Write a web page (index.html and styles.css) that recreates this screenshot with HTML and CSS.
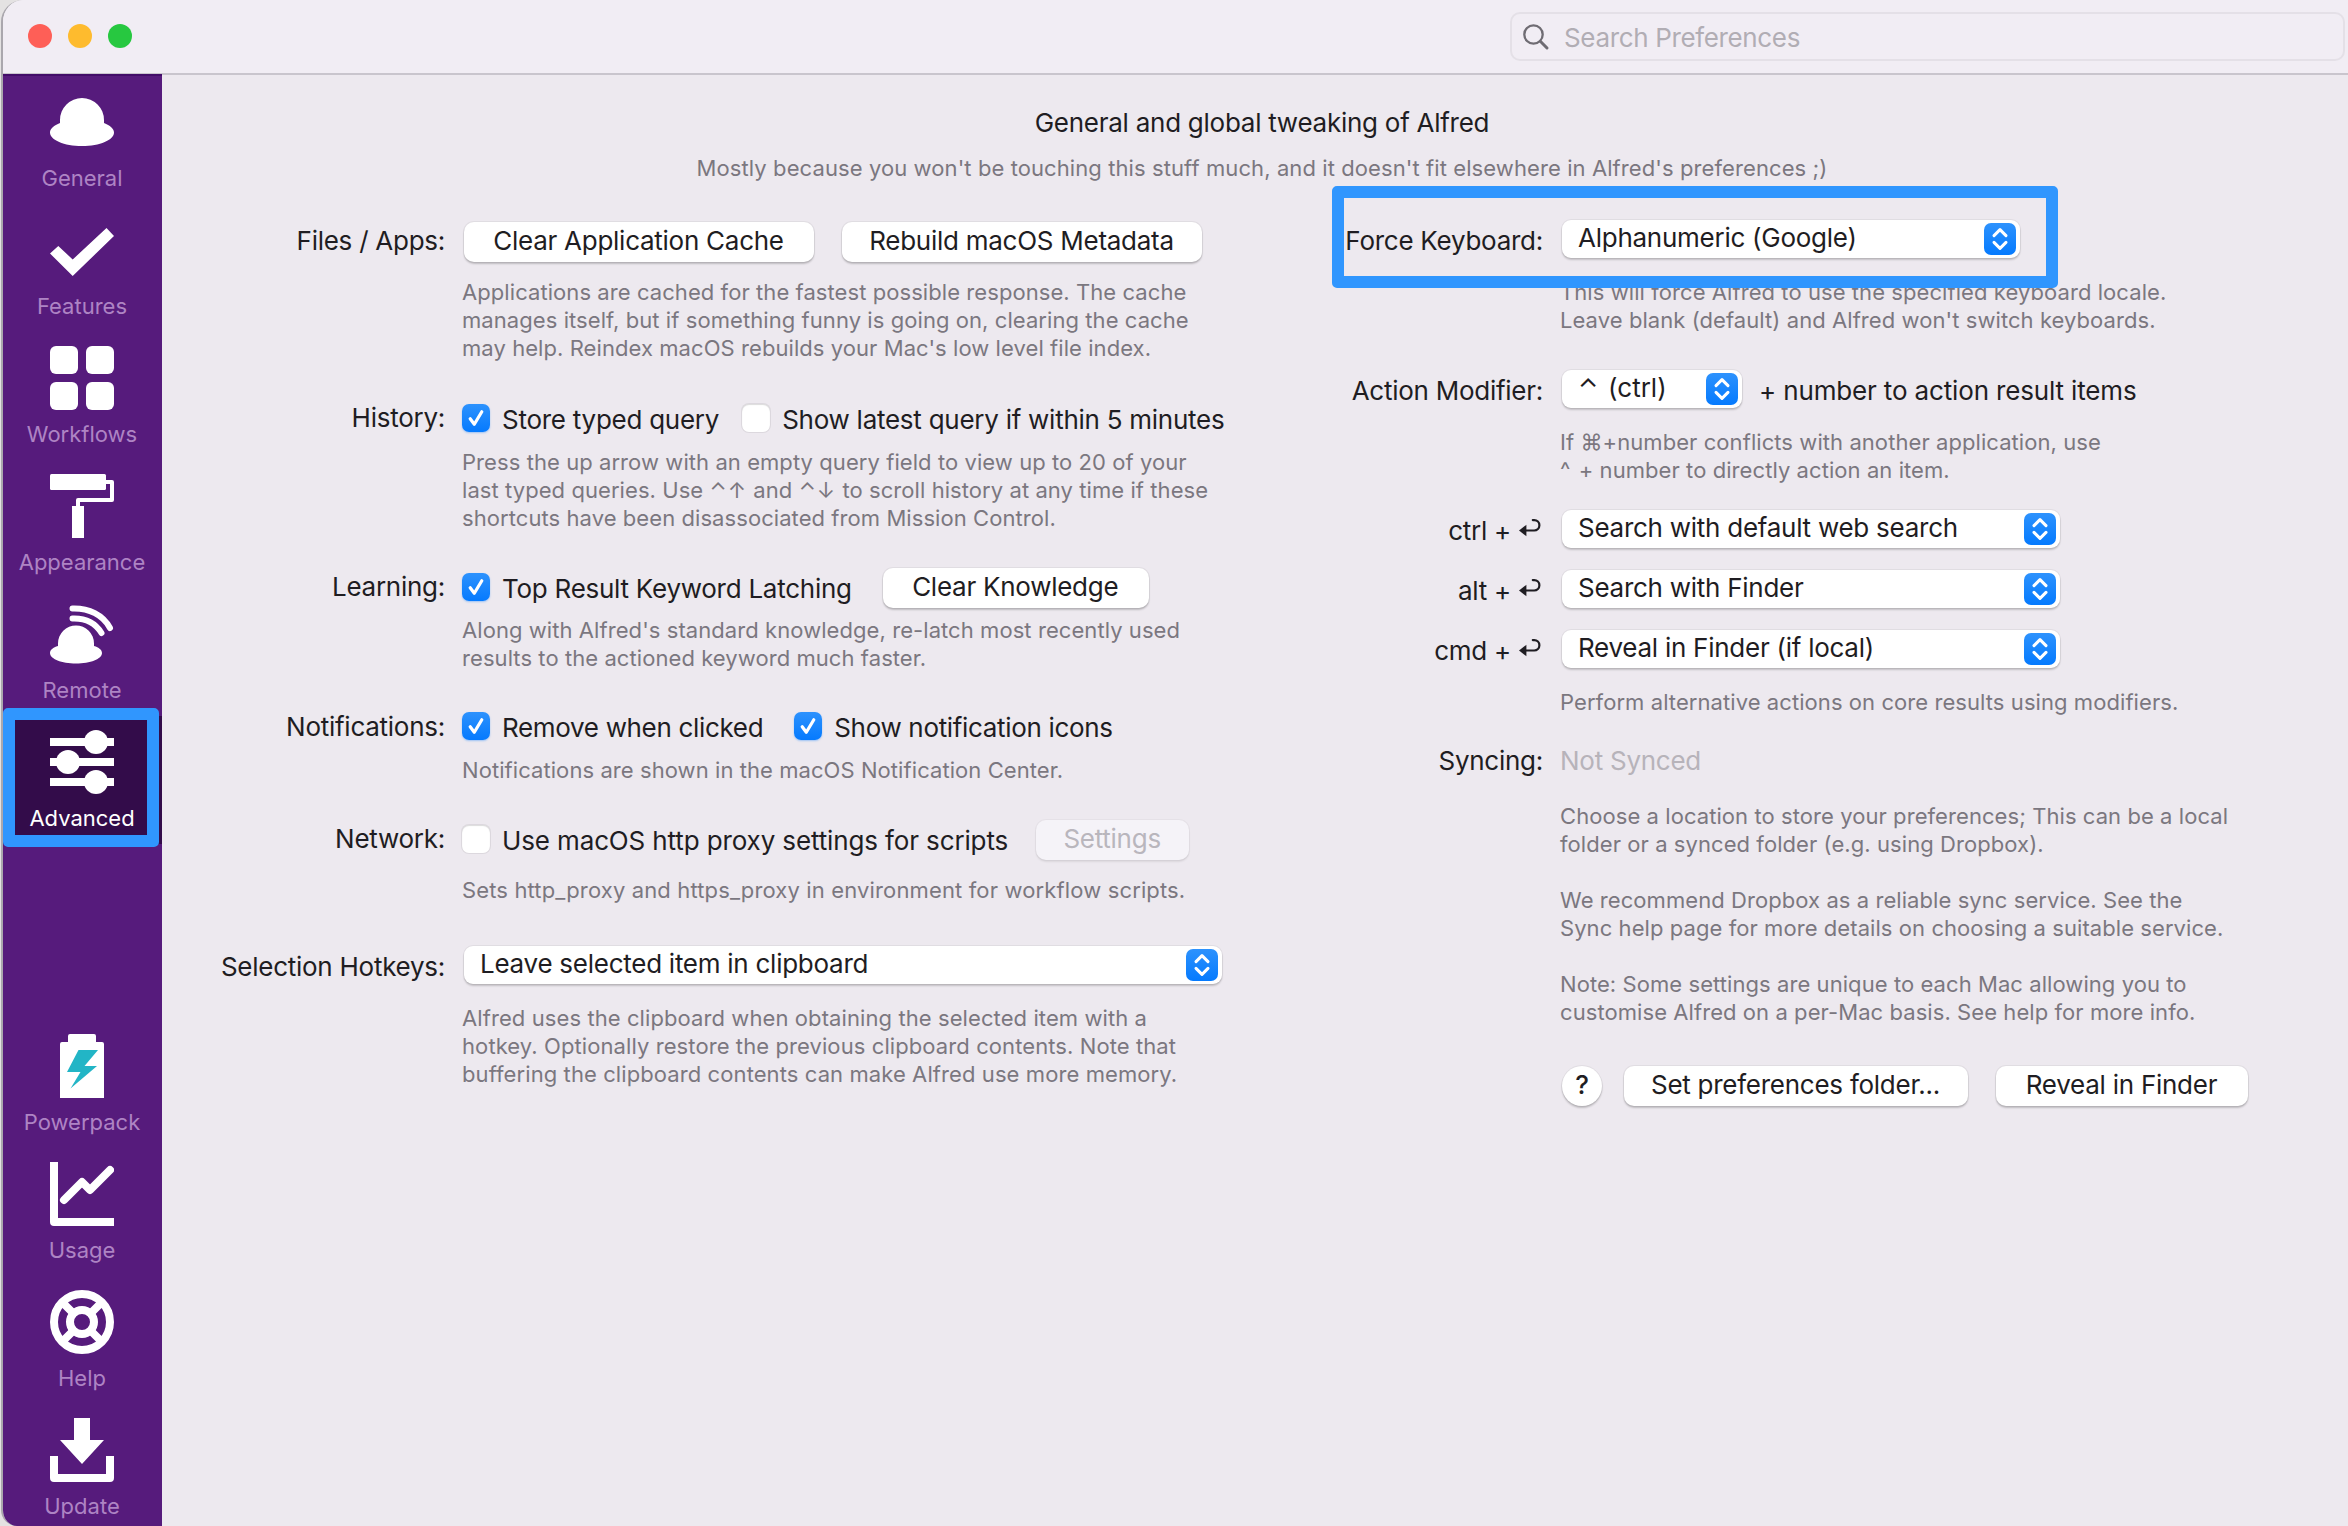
FILE: index.html
```html
<!DOCTYPE html>
<html lang="en">
<head>
<meta charset="utf-8">
<title>Alfred Preferences</title>
<link rel="stylesheet" href="styles.css">
</head>
<body>
<svg class="defs" aria-hidden="true">
  <symbol id="tick" viewBox="0 0 28 28"><path d="M8.2 14.8 12.3 20.3 19.8 7.8" fill="none" stroke="#fff" stroke-width="3.2" stroke-linecap="round" stroke-linejoin="round"/></symbol>
  <symbol id="chevrons" viewBox="0 0 32 32"><path d="M10 12.6 16 6.6l6 6M10 19.4l6 6 6-6" fill="none" stroke="#fff" stroke-width="3" stroke-linecap="round" stroke-linejoin="round"/></symbol>
  <symbol id="return" viewBox="0 0 24 20"><path d="M6 12.5h10.2a5.2 5.2 0 0 0 0-10.4h-1.4" fill="none" stroke="#1f1d22" stroke-width="2.2" stroke-linecap="round"/><path d="M1 12.5 8.4 6.8v11.4z" fill="#1f1d22"/></symbol>
</svg>
<div class="window">
  <header class="titlebar">
    <div class="lights"><i class="light close"></i><i class="light minimise"></i><i class="light zoom"></i></div>
    <div class="search">
      <svg width="28" height="28" viewBox="0 0 28 28"><circle cx="11.5" cy="11.5" r="9.2" fill="none" stroke="#6f6c73" stroke-width="2.3"/><path d="M18.3 18.3 25 25" stroke="#6f6c73" stroke-width="3" stroke-linecap="round"/></svg>
      <span>Search Preferences</span>
    </div>
  </header>
  <div class="body">
    <nav class="sidebar">
      <a class="item"><svg viewBox="0 0 64 64"><path d="M10 33V30a22 22 0 0 1 44 0v3c6 2.500 10 5.500 10 9.500C64 50 50 56 32 56S0 50 0 42.500C0 38.500 4 35.500 10 33z"/></svg>General</a>
      <a class="item"><svg viewBox="0 0 64 64"><path d="M0 35.500 8.300 28 22.700 41.500 56.500 10 64 18 22.700 58z"/></svg>Features</a>
      <a class="item"><svg viewBox="0 0 64 64"><rect width="28" height="28" rx="6"/><rect x="36" width="28" height="28" rx="6"/><rect y="36" width="28" height="28" rx="6"/><rect x="36" y="36" width="28" height="28" rx="6"/></svg>Workflows</a>
      <a class="item"><svg viewBox="0 0 64 64"><rect width="56" height="16" rx="1.500"/><path d="M56 8h6v18H28v7" fill="none" stroke="#fff" stroke-width="4" stroke-linejoin="round"/><rect x="22" y="32" width="12" height="32"/></svg>Appearance</a>
      <a class="item"><svg viewBox="0 0 64 64"><path d="M8 44V41.500a18 18 0 0 1 36 0V44c5 1.500 8 4 8 7 0 6-11.600 10.500-26 10.500S0 57 0 51c0-3 3-5.500 8-7z"/><path d="M22.500 16.500C36 16 46 22 51.500 31M22.500 6.500C39 6 53 13 60 26" fill="none" stroke="#fff" stroke-width="6" stroke-linecap="round"/></svg>Remote</a>
      <a class="item active"><svg viewBox="0 0 64 64"><rect y="8" width="64" height="8"/><rect y="28" width="64" height="8"/><rect y="48" width="64" height="8"/><circle cx="46" cy="12" r="12"/><circle cx="18" cy="32" r="12"/><circle cx="46" cy="52" r="12"/></svg>Advanced</a>
      <a class="item lower"><svg viewBox="0 0 64 64"><path d="M20 0h24q2 0 2 2v6h6q2 0 2 2v54H10V10q0-2 2-2h6V2q0-2 2-2z"/><path d="M28.500 16H48L34.500 32H47L20.500 54.500 30.500 38H17z" fill="#22b5c6"/></svg>Powerpack</a>
      <a class="item"><svg viewBox="0 0 64 64"><path d="M0 0h8v56h56v8H4q-4 0-4-4z"/><path d="M14 38 32 20l8 8L60 8" fill="none" stroke="#fff" stroke-width="8" stroke-linecap="round" stroke-linejoin="round"/></svg>Usage</a>
      <a class="item"><svg viewBox="0 0 64 64"><g fill="none" stroke="#fff"><circle cx="32" cy="32" r="28" stroke-width="8"/><circle cx="32" cy="32" r="12" stroke-width="8"/><path d="M41 23l10-10M23 23 13 13M41 41l10 10M23 41 13 51" stroke-width="8"/></g></svg>Help</a>
      <a class="item"><svg viewBox="0 0 64 64"><path d="M24 0h16v22h14L32 46 10 22h14z"/><path d="M0 38h8v18h48V38h8v22q0 4-4 4H4q-4 0-4-4z"/></svg>Update</a>
    </nav>
    <main class="main">
      <div class="panel">
        <h1 class="title">General and global tweaking of Alfred</h1>
        <p class="subtitle">Mostly because you won't be touching this stuff much, and it doesn't fit elsewhere in Alfred's preferences ;)</p>
        <div class="columns">
          <section class="column left">
            <div class="row">
              <div class="label">Files / Apps:</div>
              <div class="line"><button class="button clear-cache">Clear Application Cache</button><button class="button rebuild">Rebuild macOS Metadata</button></div>
              <p class="desc">Applications are cached for the fastest possible response. The cache<br>manages itself, but if something funny is going on, clearing the cache<br>may help. Reindex macOS rebuilds your Mac's low level file index.</p>
            </div>
            <div class="row history">
              <div class="label">History:</div>
              <div class="line"><span class="check on"><svg><use href="#tick"/></svg></span><span class="check-label">Store typed query</span><span class="check second"></span><span class="check-label">Show latest query if within 5 minutes</span></div>
              <p class="desc">Press the up arrow with an empty query field to view up to 20 of your<br>last typed queries. Use <span class="keys">⌃↑</span> and <span class="keys">⌃↓</span> to scroll history at any time if these<br>shortcuts have been disassociated from Mission Control.</p>
            </div>
            <div class="row learning">
              <div class="label">Learning:</div>
              <div class="line"><span class="check on"><svg><use href="#tick"/></svg></span><span class="check-label">Top Result Keyword Latching</span><button class="button knowledge">Clear Knowledge</button></div>
              <p class="desc">Along with Alfred's standard knowledge, re-latch most recently used<br>results to the actioned keyword much faster.</p>
            </div>
            <div class="row notifications">
              <div class="label">Notifications:</div>
              <div class="line"><span class="check on"><svg><use href="#tick"/></svg></span><span class="check-label">Remove when clicked</span><span class="check on third"><svg><use href="#tick"/></svg></span><span class="check-label">Show notification icons</span></div>
              <p class="desc">Notifications are shown in the macOS Notification Center.</p>
            </div>
            <div class="row network">
              <div class="label">Network:</div>
              <div class="line"><span class="check"></span><span class="check-label">Use macOS http proxy settings for scripts</span><button class="button settings" disabled>Settings</button></div>
              <p class="desc">Sets http_proxy and https_proxy in environment for workflow scripts.</p>
            </div>
            <div class="row hotkeys">
              <div class="label">Selection Hotkeys:</div>
              <div class="line"><div class="select wide">Leave selected item in clipboard<svg><use href="#chevrons"/></svg></div></div>
              <p class="desc">Alfred uses the clipboard when obtaining the selected item with a<br>hotkey. Optionally restore the previous clipboard contents. Note that<br>buffering the clipboard contents can make Alfred use more memory.</p>
            </div>
          </section>
          <section class="column right">
            <div class="row force">
              <div class="label">Force Keyboard:</div>
              <div class="line"><div class="select keyboard">Alphanumeric (Google)<svg><use href="#chevrons"/></svg></div></div>
              <p class="desc">This will force Alfred to use the specified keyboard locale.<br>Leave blank (default) and Alfred won't switch keyboards.</p>
              <div class="highlight keyboard-highlight"></div>
            </div>
            <div class="row modifier">
              <div class="label">Action Modifier:</div>
              <div class="line"><div class="select ctrl"><span>⌃&nbsp;<span class="ctrl-name">(ctrl)</span></span><svg><use href="#chevrons"/></svg></div><span class="suffix">+ number to action result items</span></div>
              <p class="desc">If ⌘+number conflicts with another application, use<br><span class="caret">^</span> + number to directly action an item.</p>
            </div>
            <div class="row key first">
              <div class="label">ctrl + <svg class="return"><use href="#return"/></svg></div>
              <div class="line"><div class="select action">Search with default web search<svg><use href="#chevrons"/></svg></div></div>
            </div>
            <div class="row key">
              <div class="label">alt + <svg class="return"><use href="#return"/></svg></div>
              <div class="line"><div class="select action">Search with Finder<svg><use href="#chevrons"/></svg></div></div>
            </div>
            <div class="row key last">
              <div class="label">cmd + <svg class="return"><use href="#return"/></svg></div>
              <div class="line"><div class="select action">Reveal in Finder (if local)<svg><use href="#chevrons"/></svg></div></div>
              <p class="desc">Perform alternative actions on core results using modifiers.</p>
            </div>
            <div class="row sync">
              <div class="label">Syncing:</div>
              <div class="line"><span class="muted">Not Synced</span></div>
              <p class="desc">Choose a location to store your preferences; This can be a local<br>folder or a synced folder (e.g. using Dropbox).</p>
              <p class="desc">We recommend Dropbox as a reliable sync service. See the<br>Sync help page for more details on choosing a suitable service.</p>
              <p class="desc">Note: Some settings are unique to each Mac allowing you to<br>customise Alfred on a per-Mac basis. See help for more info.</p>
              <div class="line actions"><button class="button help">?</button><button class="button folder">Set preferences folder...</button><button class="button reveal">Reveal in Finder</button></div>
            </div>
          </section>
        </div>
      </div>
    </main>
  </div>
  <div class="highlight nav-highlight"></div>
</div>
</body>
</html>
```
FILE: styles.css
```css
* { box-sizing: border-box; }
body {
  margin: 0;
  height: 1526px;
  overflow: hidden;
  background: #e4e2e2;
  color: #1f1d22;
  font: 26px/30px Inter, "Liberation Sans", sans-serif;
  letter-spacing: -0.26px;
}
h1, p { margin: 0; font-weight: 400; }
.defs { position: absolute; width: 0; height: 0; }

.window {
  position: relative;
  height: 1526px;
  margin-left: 1px;
  border-left: 2px solid #aaa7ad;
  border-radius: 22px 0 0 16px;
  background: #ede9ef;
  overflow: hidden;
}

.titlebar {
  height: 75px;
  display: flex;
  justify-content: space-between;
  padding: 12px 3px 0 25px;
  background: #f1edf4;
  border-bottom: 2px solid #c9c5cd;
}
.lights { display: flex; gap: 16px; padding-top: 12px; }
.light { width: 24px; height: 24px; border-radius: 50%; }
.close { background: #fe5f57; }
.minimise { background: #febb2e; }
.zoom { background: #27c840; }
.search {
  width: 835px;
  height: 49px;
  display: flex;
  align-items: center;
  gap: 14px;
  padding-left: 10px;
  border: 2px solid #e4e0e7;
  border-radius: 10px;
  color: #b1adb4;
}
.search span { padding-top: 2px; letter-spacing: -0.35px; }

.body { display: flex; height: 1451px; }
.sidebar {
  flex: none;
  width: 159px;
  background: #561b7c;
  border-top: 2px solid #420d68;
  margin-top: -1px;
}
.item {
  height: 128px;
  display: flex;
  flex-direction: column;
  align-items: center;
  padding: 14px 1px 0 0;
  font-size: 22px;
  line-height: 28px;
  letter-spacing: 0;
  color: #ae84c4;
}
.item svg { width: 64px; height: 64px; margin-bottom: 10px; fill: #fff; }
.item.active { background: #330c4a; color: #fff; }
.item.lower { margin-top: 176px; }

.main { flex: 1; min-width: 0; overflow: hidden; }
.panel { width: 2200px; padding-top: 33px; }
.title { font-size: 26px; line-height: 30px; text-align: center; }
.subtitle {
  margin-top: 16px;
  font-size: 22px;
  line-height: 28px;
  letter-spacing: 0.09px;
  text-align: center;
  color: #7b777f;
}
.columns { display: grid; grid-template-columns: 1100px 1100px; margin-top: 39px; }

.row { position: relative; display: grid; column-gap: 17px; }
.left .row { grid-template-columns: 283px 1fr; }
.right .row { grid-template-columns: 281px 1fr; }
.label { text-align: right; line-height: 40px; white-space: nowrap; }
.line { display: flex; align-items: center; height: 40px; white-space: nowrap; }
.desc {
  grid-column: 2;
  margin-top: 17px;
  font-size: 22px;
  line-height: 28px;
  letter-spacing: 0.07px;
  white-space: nowrap;
  color: #7b777f;
}

.history { margin-top: 36px; }
.history .desc { margin-top: 10px; }
.keys { letter-spacing: 1px; }
.learning { margin-top: 35px; }
.learning .desc { margin-top: 9px; }
.notifications { margin-top: 34px; }
.notifications .label { padding-top: 1px; margin-bottom: -1px; }
.notifications .desc { margin-top: 10px; }
.notifications .check-label { letter-spacing: -0.33px; }
.network { margin-top: 35px; }
.network .check-label { letter-spacing: -0.13px; }
.network .desc { margin-top: 17px; letter-spacing: 0.14px; }
.hotkeys { margin-top: 43px; }
.hotkeys .desc { margin-top: 17px; letter-spacing: 0.09px; }
.modifier { margin-top: 37px; }
.key { margin-top: 20px; }
.key.first { margin-top: 27px; }
.key .desc { margin-top: 17px; }
.sync { margin-top: 25px; }
.sync .desc { margin-top: 21px; }
.sync .desc + .desc { margin-top: 28px; }

.button {
  height: 40px;
  margin: 1px 0 0;
  padding: 0 1px 2px 0;
  border: 0;
  border-radius: 10px;
  background: #fff;
  box-shadow: 0 0 0 1px rgba(0, 0, 0, 0.05), 0 2px 2px rgba(0, 0, 0, 0.2);
  color: #1f1d22;
  font: inherit;
  letter-spacing: inherit;
  text-align: center;
}
.button:disabled { background: #f5f3f8; color: #b9b6bd; box-shadow: 0 0 0 1px rgba(0, 0, 0, 0.03), 0 2px 2px rgba(0, 0, 0, 0.08); }
.clear-cache { width: 350px; margin-left: 2px; }
.rebuild { width: 360px; margin-left: 28px; }
.knowledge { width: 266px; margin-left: 31px; }
.settings { width: 153px; margin-left: 28px; }
.actions { grid-column: 2; margin-top: 39px; }
.help { width: 40px; margin-left: 2px; border-radius: 50%; padding-right: 0; font-weight: 500; }
.folder { width: 344px; margin-left: 22px; }
.reveal { width: 252px; margin-left: 28px; }

.check {
  width: 28px;
  height: 28px;
  border-radius: 7px;
  background: #fff;
  box-shadow: inset 0 1px 1px rgba(0, 0, 0, 0.14), 0 0 0 1px rgba(0, 0, 0, 0.07);
}
.check.on { background: linear-gradient(#2d92fd, #057afe); box-shadow: 0 1px 2px rgba(5, 122, 254, 0.35); }
.check svg { display: block; width: 28px; height: 28px; }
.check.second { margin-left: 23px; }
.check.third { margin-left: 31px; }
.check-label { margin-left: 12px; padding-top: 4px; }

.select {
  height: 38px;
  display: flex;
  align-items: center;
  justify-content: space-between;
  margin: 0 0 4px 2px;
  padding: 0 4px 2px 16px;
  border-radius: 9px;
  background: #fff;
  box-shadow: 0 0 0 1px rgba(0, 0, 0, 0.05), 0 2px 2px rgba(0, 0, 0, 0.18);
}
.select svg {
  width: 32px;
  height: 32px;
  margin-top: 1px;
  border-radius: 7px;
  background: linear-gradient(#2d92fd, #057afe);
}
.wide { width: 758px; }
.keyboard { width: 458px; }
.ctrl { width: 180px; }
.ctrl-name { margin-left: 3px; letter-spacing: 0; }
.action { width: 498px; }
.suffix { margin-left: 17px; letter-spacing: -0.15px; }
.return { display: inline-block; width: 24px; height: 20px; vertical-align: 2px; margin-right: 1px; }
.caret { margin-right: 2px; }
.muted { color: #b7b3ba; }

.highlight { position: absolute; border: 12px solid #3096fe; border-radius: 5px; }
.keyboard-highlight { left: 70px; top: -35px; width: 726px; height: 102px; }
.nav-highlight { left: 0; top: 708px; width: 156px; height: 139px; }
```
